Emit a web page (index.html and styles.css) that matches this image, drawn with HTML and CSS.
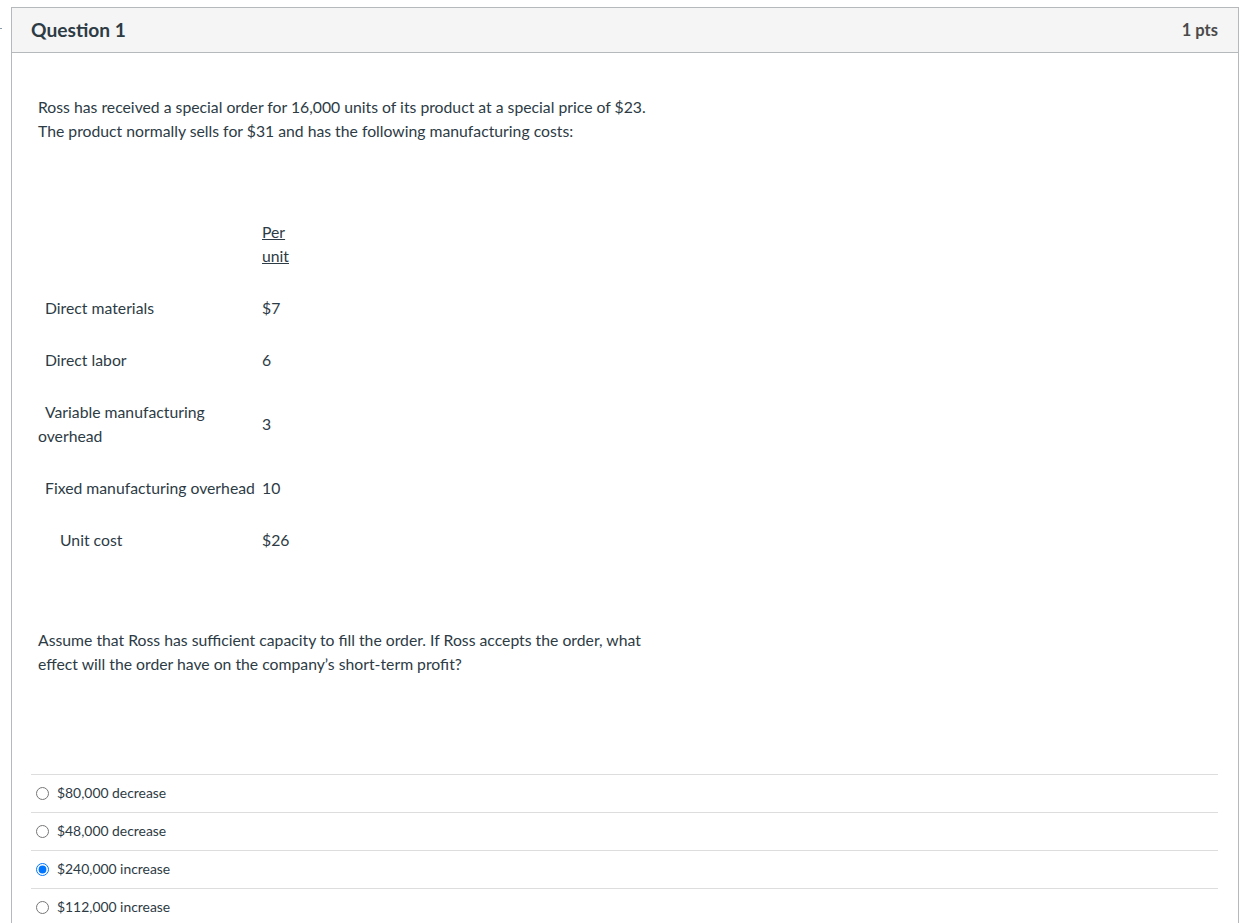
FILE: index.html
```html
<!DOCTYPE html>
<html>
<head>
<meta charset="utf-8">
<link rel="stylesheet" href="styles.css">
</head>
<body>
<span class="edge-mark"></span>
<div class="question">
  <div class="q-header">
    <span class="q-title">Question 1</span>
    <span class="q-points">1 pts</span>
  </div>
  <div class="q-body">
    <div class="q-text">
      <p class="lead">Ross has received a special order for 16,000 units of its product at a special price of $23.<br>The product normally sells for $31 and has the following manufacturing costs:</p>
      <table class="costs">
        <tr>
          <td class="label"></td>
          <td class="val"><u>Per unit</u></td>
        </tr>
        <tr>
          <td class="label ind">Direct materials</td>
          <td class="val">$7</td>
        </tr>
        <tr>
          <td class="label ind">Direct labor</td>
          <td class="val">6</td>
        </tr>
        <tr>
          <td class="label ind">Variable manufacturing overhead</td>
          <td class="val">3</td>
        </tr>
        <tr>
          <td class="label ind">Fixed manufacturing overhead</td>
          <td class="val">10</td>
        </tr>
        <tr>
          <td class="label ind2">Unit cost</td>
          <td class="val">$26</td>
        </tr>
      </table>
      <p class="ask">Assume that Ross has sufficient capacity to fill the order. If Ross accepts the order, what<br>effect will the order have on the company’s short-term profit?</p>
    </div>
    <div class="answers">
      <label class="answer"><input type="radio" name="a"><span>$80,000 decrease</span></label>
      <label class="answer"><input type="radio" name="a"><span>$48,000 decrease</span></label>
      <label class="answer"><input type="radio" name="a" checked><span>$240,000 increase</span></label>
      <label class="answer"><input type="radio" name="a"><span>$112,000 increase</span></label>
    </div>
  </div>
</div>
</body>
</html>
```

FILE: styles.css
```css
* { box-sizing: border-box; }
html, body { margin: 0; padding: 0; background: #fff; }
body {
  font-family: Lato, "Noto Sans", sans-serif;
  color: #2d3b45;
  padding: 7px 6px 0 11px;
  position: relative;
}
.edge-mark {
  position: absolute;
  left: 0;
  top: 28px;
  width: 2px;
  height: 1px;
  background: #8a9aa6;
}
.question {
  border: 1px solid #b5b9bc;
  border-bottom: none;
  min-height: 916px;
}
.q-header {
  background: #f5f5f5;
  border-bottom: 1px solid #b5b9bc;
  height: 45px;
  display: flex;
  align-items: center;
  justify-content: space-between;
  padding: 0 20px 2px 19px;
}
.q-title {
  font-size: 19.2px;
  font-weight: 700;
  color: #2d3b45;
}
.q-points {
  font-size: 16.5px;
  font-weight: 700;
  color: #4a4a4a;
  margin-top: 2px;
}
.q-body {
  padding: 42px 20px 0 19px;
}
.q-text {
  padding: 0 7px;
  font-size: 15.75px;
  line-height: 24px;
}
.q-text p { margin: 0; }
.lead { margin-bottom: 63px !important; }
.costs {
  border-collapse: collapse;
  margin-bottom: 62px;
}
.costs td {
  padding: 14px 0;
  vertical-align: middle;
}
.costs .label { width: 224px; }
.costs .val { width: 30px; }
.costs .ind { text-indent: 7px; }
.costs .ind2 { text-indent: 22px; }
.answers {
  margin-top: 98px;
  font-size: 13.9px;
}
.answer {
  display: flex;
  align-items: center;
  height: 38px;
  padding-bottom: 3px;
  border-top: 1px solid #ddd;
}
.answer input {
  margin: 2px 8px 0 5px;
  width: 13px;
  height: 13px;
}
```
